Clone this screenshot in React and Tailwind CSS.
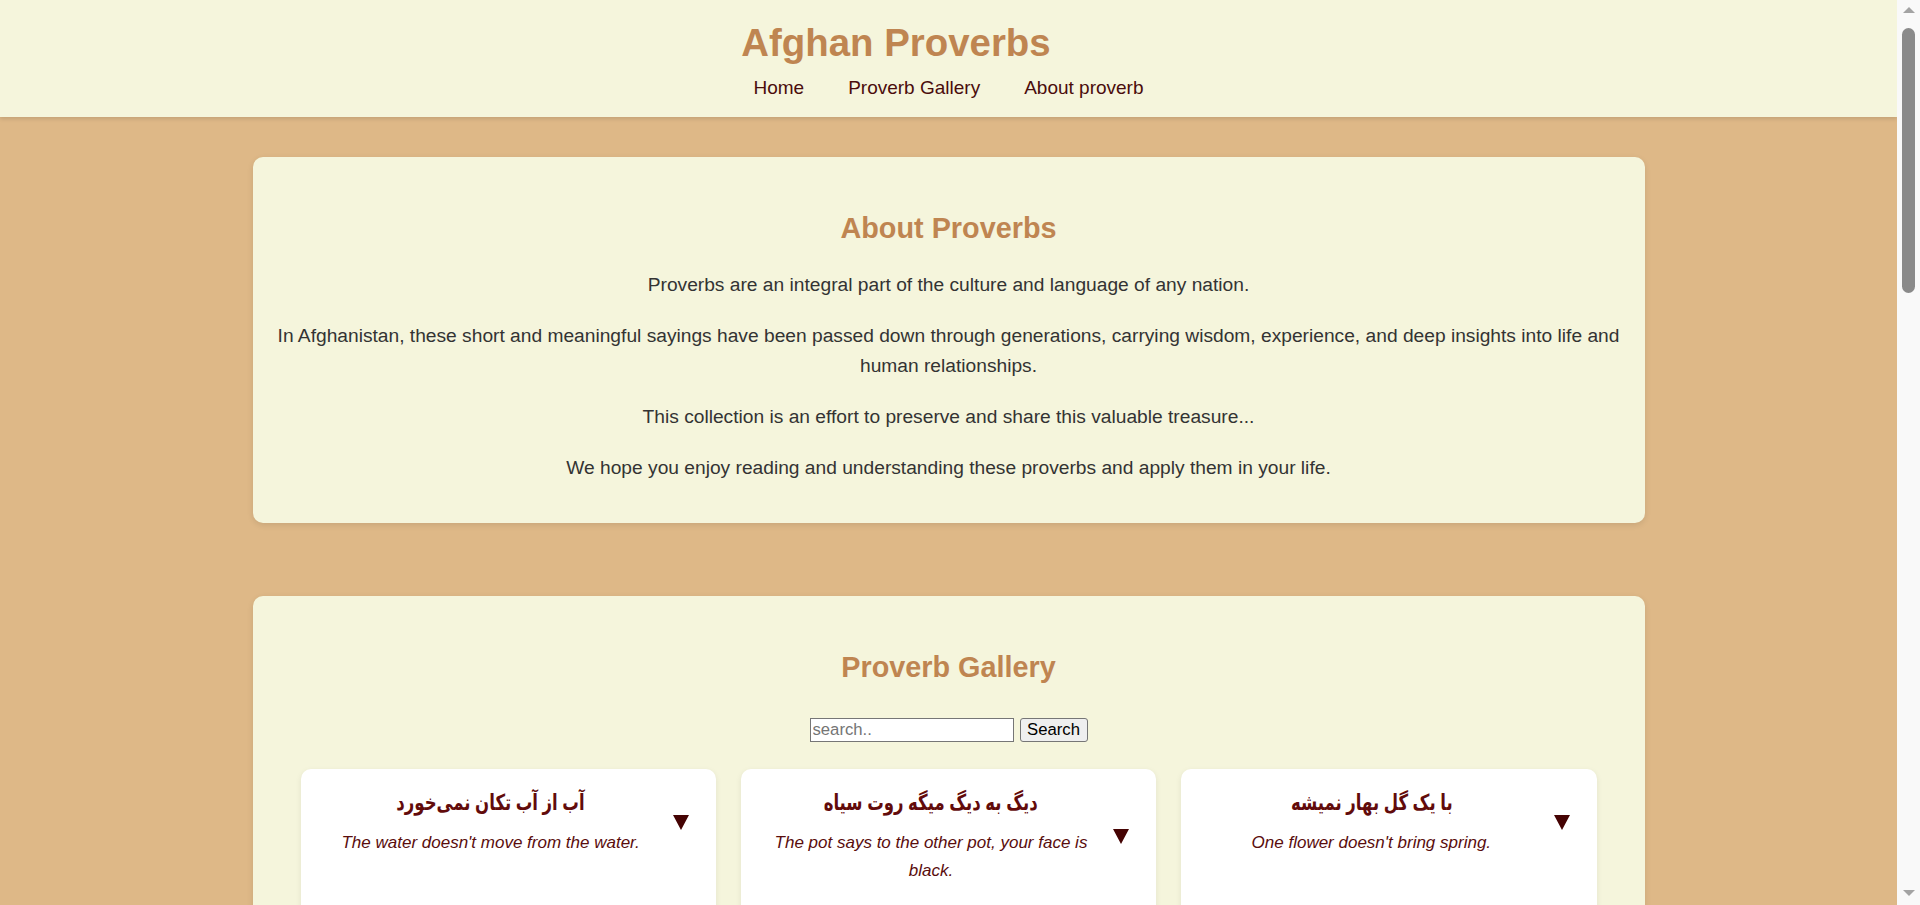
import React from "react";

const proverbs = [
  { fa: "آب از آب تکان نمی‌خورد", en: "The water doesn't move from the water." },
  { fa: "دیگ به دیگ میگه روت سیاه", en: "The pot says to the other pot, your face is black." },
  { fa: "با یک گل بهار نمیشه", en: "One flower doesn't bring spring." },
];

function Arrow() {
  return (
    <svg width="16" height="15" viewBox="0 0 16 15" className="shrink-0">
      <polygon points="0,0 16,0 8,15" fill="#450303" />
    </svg>
  );
}

function ProverbCard({ fa, en }) {
  return (
    <div className="bg-white rounded-[10px] shadow-[0_2px_6px_rgba(0,0,0,0.08)] pl-[20px] pr-[27px] pt-[20px] pb-[80px] flex items-start">
      <div className="flex items-center gap-[12px] w-full">
        <div className="flex-1 text-center">
          <h3 className="text-[22px] leading-[28px] font-bold text-[#620b0b]">
            <span dir="rtl" className="inline-block scale-x-[0.75]">{fa}</span>
          </h3>
          <p className="mt-[12px] text-[17px] leading-[28px] italic text-[#5a0d0d]">{en}</p>
        </div>
        <Arrow />
      </div>
    </div>
  );
}

function Scrollbar() {
  return (
    <div className="w-[23px] h-[905px] bg-[#f9f9f9] flex flex-col items-center shrink-0">
      <svg width="14" height="8" viewBox="0 0 14 8" className="mt-[6px]">
        <polygon points="7,1 13,7 1,7" fill="#a3a3a3" />
      </svg>
      <div className="mt-[14px] w-[13px] h-[265px] rounded-full bg-[#8a8a8a]" />
      <div className="flex-1" />
      <svg width="14" height="8" viewBox="0 0 14 8" className="mb-[8px]">
        <polygon points="1,1 13,1 7,7" fill="#a3a3a3" />
      </svg>
    </div>
  );
}

export default function App() {
  return (
    <div className="flex w-[1920px] h-[905px] overflow-hidden font-['Liberation_Sans','DejaVu_Sans',sans-serif]">
      <div className="w-[1897px] h-[905px] overflow-hidden bg-[#deb887] shrink-0">
        <header className="h-[117px] bg-[#f5f5dc] shadow-[0_2px_4px_rgba(0,0,0,0.12)] flex flex-col items-center pt-[24px] relative">
          <h1 className="text-[38.4px] leading-[38.4px] font-bold text-[#bf8551] mr-[105px]">Afghan Proverbs</h1>
          <nav className="mt-[16px] flex gap-[44px] text-[19px] leading-[19px] text-[#4a0c0c]">
            <a>Home</a>
            <a>Proverb Gallery</a>
            <a>About proverb</a>
          </nav>
        </header>

        <section className="mt-[40px] mx-auto w-[1392px] bg-[#f5f5dc] rounded-[10px] shadow-[0_2px_6px_rgba(0,0,0,0.1)] px-[24px] pt-[54px] pb-[39px] text-center">
          <h2 className="text-[28.8px] leading-[34px] font-bold text-[#bf8551]">About Proverbs</h2>
          <div className="mt-[25px] flex flex-col gap-[20px] text-[19.2px] leading-[30.72px] text-[#333333]">
            <p>Proverbs are an integral part of the culture and language of any nation.</p>
            <p>
              In Afghanistan, these short and meaningful sayings have been passed down through generations, carrying wisdom, experience, and deep insights into life and human relationships.
            </p>
            <p>This collection is an effort to preserve and share this valuable treasure...</p>
            <p>We hope you enjoy reading and understanding these proverbs and apply them in your life.</p>
          </div>
        </section>

        <section className="mt-[73px] mx-auto w-[1392px] bg-[#f5f5dc] rounded-[10px] shadow-[0_2px_6px_rgba(0,0,0,0.1)] px-[48px] pt-[54px] pb-[40px] text-center">
          <h2 className="text-[28.8px] leading-[34px] font-bold text-[#bf8551]">Proverb Gallery</h2>
          <div className="mt-[34px] flex justify-center gap-[6px]">
            <input
              type="text"
              placeholder="search.."
              className="w-[204px] h-[24px] border border-[#767676] bg-white px-[2px] text-[16.7px] text-black placeholder:text-[#757575] outline-none"
            />
            <button className="w-[68px] h-[24px] border border-[#767676] rounded-[3px] bg-[#efefef] text-[16.7px] leading-[20px] text-black">
              Search
            </button>
          </div>
          <div className="mt-[27px] grid grid-cols-3 gap-[25px]">
            {proverbs.map((p) => (
              <ProverbCard key={p.en} fa={p.fa} en={p.en} />
            ))}
          </div>
        </section>
      </div>
      <Scrollbar />
    </div>
  );
}
